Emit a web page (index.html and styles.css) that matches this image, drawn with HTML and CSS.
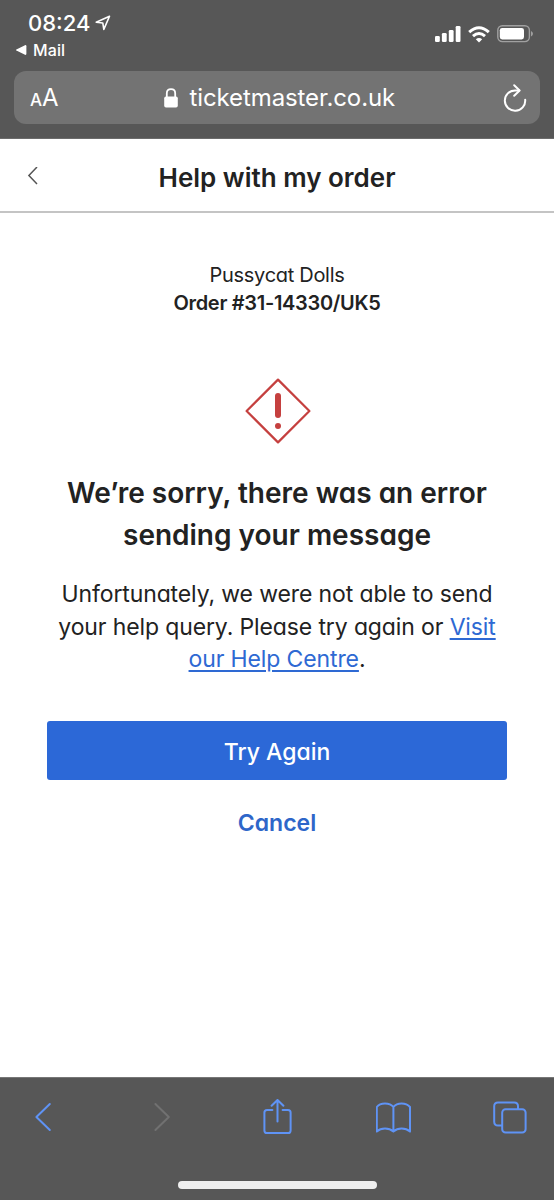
FILE: index.html
```html
<!DOCTYPE html>
<html lang="en">

<head>
    <meta charset="UTF-8">
    <meta name="viewport" content="width=device-width, initial-scale=1.0">
    <title>Help with my order</title>
    <link rel="stylesheet" href="styles.css">
</head>

<body>

    <div class="browser-top">
        <div class="status-bar">
            <div>
                <div class="clock">
                    <span>08:24</span>
                    <svg width="16" height="16" viewBox="0 0 16 16" fill="none" stroke="#fff" stroke-width="1.6" stroke-linejoin="round">
                        <path d="M14.5 1.2 L1.2 7.2 L7.8 8 L8.8 14.4 Z"/>
                    </svg>
                </div>
                <div class="back-to-app">
                    <svg width="11" height="10" viewBox="0 0 11 10" fill="#fff">
                        <path d="M0.4 4.4 L9 0.2 Q10.4 -0.2 10.4 1.2 V8.8 Q10.4 10.2 9 9.8 L0.4 5.6 Q-0.4 5 0.4 4.4 Z"/>
                    </svg>
                    <span>Mail</span>
                </div>
            </div>
            <div class="status-icons">
                <svg width="26" height="16" viewBox="0 0 26 16" fill="#fff">
                    <rect x="0" y="10" width="4.8" height="6" rx="1.3"/>
                    <rect x="6.9" y="7" width="4.8" height="9" rx="1.3"/>
                    <rect x="13.8" y="4" width="4.8" height="12" rx="1.3"/>
                    <rect x="20.7" y="0" width="4.8" height="16" rx="1.3"/>
                </svg>
                <svg width="22" height="17" viewBox="0 0 22 17" fill="none" stroke="#fff" stroke-width="3">
                    <path d="M1.2 6.2 Q11 -2.8 20.8 6.2"/>
                    <path d="M5 10.2 Q11 4.8 17 10.2"/>
                    <path d="M11 16.5 L7.8 13.2 Q11 10.6 14.2 13.2 Z" fill="#fff" stroke="none"/>
                </svg>
                <svg width="36" height="18" viewBox="0 0 36 18">
                    <rect x="0.8" y="0.8" width="31.6" height="15.8" rx="4.5" fill="none" stroke="#a0a0a0" stroke-width="1.4"/>
                    <rect x="2.8" y="2.9" width="24.2" height="11.6" rx="2.4" fill="#fff"/>
                    <path d="M34 6 Q36 7 36 8.8 Q36 10.6 34 11.6 Z" fill="#a0a0a0"/>
                </svg>
            </div>
        </div>
        <div class="address-bar">
            <div class="text-size"><small>A</small>A</div>
            <div class="url">
                <svg width="14" height="20" viewBox="0 0 14 20">
                    <rect x="0.2" y="8.4" width="13.6" height="11.2" rx="1.8" fill="#fff"/>
                    <path d="M2.8 9 V5.4 Q2.8 1.2 7 1.2 Q11.2 1.2 11.2 5.4 V9" fill="none" stroke="#fff" stroke-width="1.8"/>
                </svg>
                <span>ticketmaster.co.uk</span>
            </div>
            <svg class="reload" width="24" height="28" viewBox="0 0 24 28" fill="none" stroke="#fff" stroke-width="2" stroke-linecap="round" stroke-linejoin="round">
                <path d="M16.2 6.4 H12.2 A10.2 10.2 0 1 0 22.2 15.8"/>
                <path d="M11.2 1.3 L16.6 6.5 L11.2 11.7"/>
            </svg>
        </div>
    </div>

    <header class="page-header">
        <svg class="back" width="12" height="20" viewBox="0 0 12 20" fill="none" stroke="#555" stroke-width="1.5">
            <path d="M11 0 L2.9 8.5 L11 17"/>
        </svg>
        <h1>Help with my order</h1>
    </header>

    <main class="content">
        <p class="event">Pussycat Dolls</p>
        <p class="order">Order #31-14330/UK5</p>

        <svg class="error-icon" width="66" height="66" viewBox="0 0 66 66">
            <path d="M33 1.6 L64.4 33 L33 64.4 L1.6 33 Z" fill="none" stroke="#c5403f" stroke-width="2.2" stroke-linejoin="round"/>
            <rect x="30" y="15" width="6" height="25" rx="3" fill="#c5403f"/>
            <circle cx="33" cy="48" r="3" fill="#c5403f"/>
        </svg>

        <h2>We’re sorry, there was an error<br>sending your message</h2>
        <p class="message">Unfortunately, we were not able to send<br>your help query. Please try again or <a href="#">Visit<br>our Help Centre</a>.</p>

        <button class="try-again">Try Again</button>
        <button class="cancel">Cancel</button>
    </main>

    <footer class="browser-bottom">
        <nav class="toolbar">
            <svg width="36" height="36" viewBox="0 0 36 36">
                <path d="M23.8 5 L10.4 18 L23.8 31"/>
            </svg>
            <svg class="disabled" width="36" height="36" viewBox="0 0 36 36">
                <path d="M12.4 5 L25.8 18 L12.4 31"/>
            </svg>
            <svg width="36" height="36" viewBox="0 0 36 36">
                <path d="M13.4 11 H8 Q5.4 11 5.4 13.6 V31.4 Q5.4 34 8 34 H29 Q31.6 34 31.6 31.4 V13.6 Q31.6 11 29 11 H23.6"/>
                <path d="M18.5 22.5 V1.2 M12.6 6.8 L18.5 1 L24.4 6.8"/>
            </svg>
            <svg width="36" height="36" viewBox="0 0 36 36">
                <path d="M17.4 8 Q14.6 4.4 9 4.4 Q3.4 4.4 0.8 8 V32.6 Q4 29.6 9 29.6 Q14 29.6 17.4 32.6 Q20.8 29.6 25.6 29.6 Q30.6 29.6 34 32.6 V8 Q31 4.4 25.6 4.4 Q20.2 4.4 17.4 8 Z M17.4 8 V32.6"/>
            </svg>
            <svg width="36" height="36" viewBox="0 0 36 36">
                <rect x="10.2" y="10.2" width="23.4" height="23.4" rx="3.4"/>
                <path d="M10 26.6 H6 Q2.2 26.6 2.2 22.8 V7.2 Q2.2 3.4 6 3.4 H22.2 Q26 3.4 26 7.2 V10"/>
            </svg>
        </nav>
        <div class="home-indicator"></div>
    </footer>

</body>

</html>
```
FILE: styles.css
```css
* {
    box-sizing: border-box;
}

body {
    margin: 0;
    height: 1200px;
    display: flex;
    flex-direction: column;
    font-family: Inter, "Liberation Sans", sans-serif;
    font-feature-settings: "cv11";
    background: #fff;
    color: #222;
}

svg {
    display: block;
    flex-shrink: 0;
}

h1, h2, p {
    margin: 0;
}

.browser-top {
    height: 139px;
    padding: 0 14px;
    background: #575757;
    border-bottom: 1px solid #6c6c6c;
    color: #fff;
    font-feature-settings: normal;
}

.status-bar {
    height: 71px;
    display: flex;
    justify-content: space-between;
}

.clock {
    display: flex;
    align-items: center;
    gap: 5px;
    height: 26px;
    margin: 10px 0 0 14px;
    font-size: 22px;
    font-weight: 500;
}

.back-to-app {
    display: flex;
    align-items: center;
    gap: 6px;
    height: 20px;
    margin: 4px 0 0 2px;
    font-size: 16px;
    font-weight: 500;
    letter-spacing: 0.1px;
}

.status-icons {
    display: flex;
    align-items: center;
    gap: 7px;
    height: 18px;
    margin: 25px 7px 0 0;
}

.address-bar {
    height: 53px;
    padding: 0 13px 0 16px;
    display: flex;
    align-items: center;
    justify-content: space-between;
    background: #737373;
    border-radius: 12px;
}

.text-size {
    padding-top: 3px;
    font-size: 24px;
    line-height: 30px;
}

.text-size small {
    font-size: 17px;
    font-weight: 500;
}

.url {
    display: flex;
    align-items: center;
    gap: 11px;
    margin-right: 2px;
    font-size: 24px;
    letter-spacing: -0.1px;
}

.page-header {
    height: 74px;
    display: flex;
    align-items: center;
    padding: 4px 26px 0;
    border-bottom: 2px solid #c4c4c4;
}

.page-header h1 {
    flex: 1;
    margin-right: 12px;
    text-align: center;
    font-size: 26px;
    font-weight: 600;
}

.content {
    flex: 1;
    display: flex;
    flex-direction: column;
    align-items: center;
    padding: 48px 47px 0;
    text-align: center;
}

.event, .order {
    font-size: 20px;
    line-height: 28px;
    letter-spacing: -0.3px;
}

.order {
    font-weight: 600;
}

.error-icon {
    margin: 61px 0 28px 2px;
}

.content h2 {
    font-size: 28px;
    font-weight: 600;
    line-height: 42px;
    white-space: nowrap;
}

.message {
    margin-top: 22px;
    font-size: 23px;
    line-height: 32.6px;
    letter-spacing: -0.12px;
    white-space: nowrap;
}

.message a {
    color: #2e69d3;
    text-decoration-thickness: 2px;
    text-underline-offset: 3px;
}

.try-again, .cancel {
    border: none;
    font: inherit;
    font-size: 23px;
    font-weight: 500;
}

.try-again {
    width: 460px;
    height: 59px;
    margin-top: 45px;
    padding-top: 4px;
    background: #2c68d7;
    color: #fff;
    border-radius: 3px;
}

.cancel {
    height: 40px;
    margin-top: 23px;
    background: none;
    color: #2e66c9;
    font-weight: 600;
}

.browser-bottom {
    height: 123px;
    padding: 21px 26px 0;
    background: #575757;
    border-top: 1px solid #777;
}

.toolbar {
    display: flex;
    justify-content: space-between;
}

.toolbar svg {
    fill: none;
    stroke: #5f93f5;
    stroke-width: 2;
    stroke-linecap: round;
    stroke-linejoin: round;
}

.toolbar .disabled {
    stroke: #717171;
}

.home-indicator {
    width: 199px;
    height: 8px;
    margin: 46px auto 0;
    border-radius: 4px;
    background: #efefef;
}
```
